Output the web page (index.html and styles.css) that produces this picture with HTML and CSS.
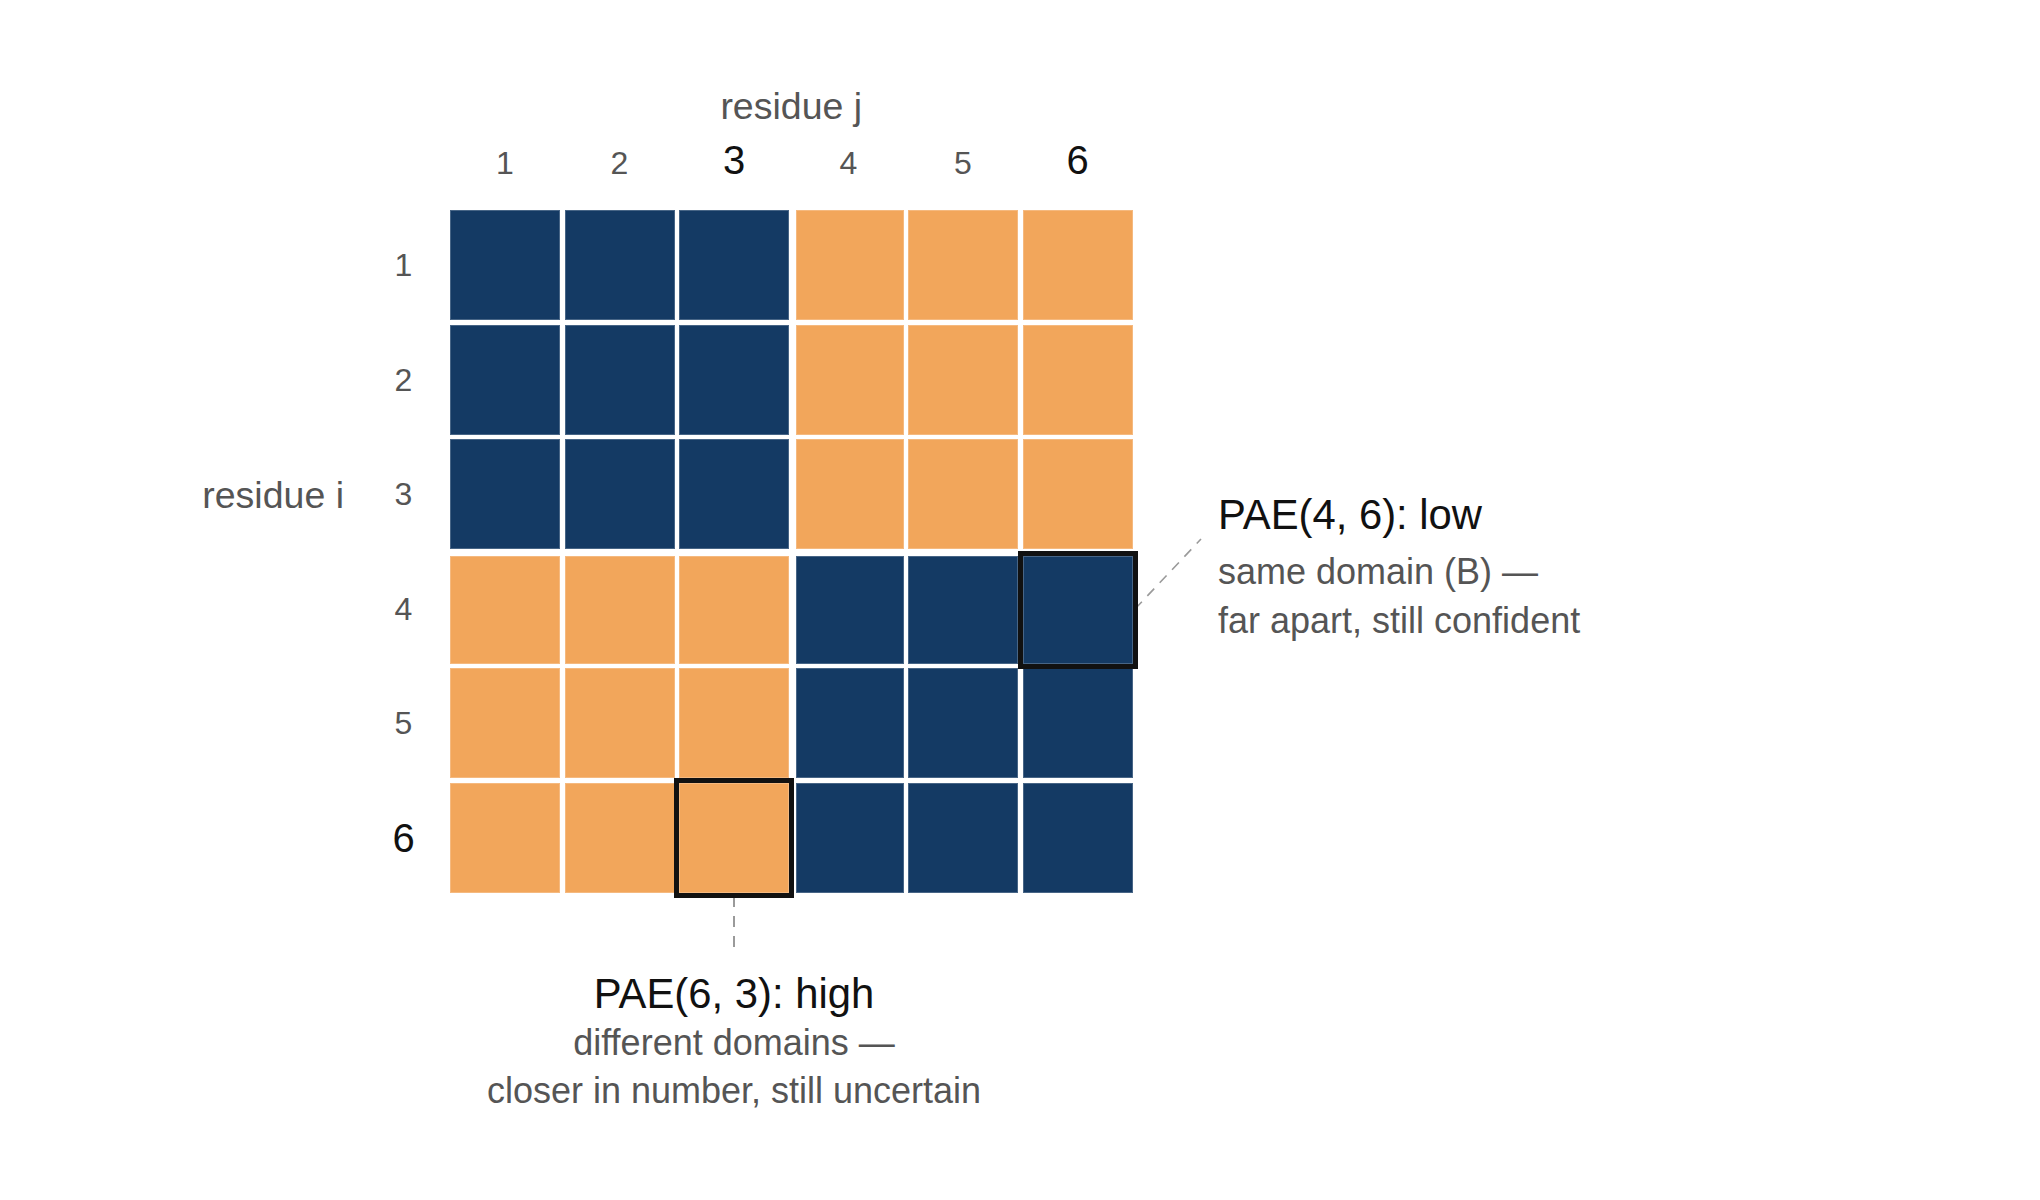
FILE: index.html
```html
<!DOCTYPE html>
<html lang="en">
<head>
<meta charset="utf-8">
<title>PAE matrix</title>
<link rel="stylesheet" href="styles.css">
</head>
<body>
<div class="figure">
  <div class="axis-j">residue j</div>
  <div class="colnums">
    <span class="num">1</span>
    <span class="num">2</span>
    <span class="num strong">3</span>
    <span class="num">4</span>
    <span class="num">5</span>
    <span class="num strong">6</span>
  </div>

  <div class="rowlabels">
    <span class="axis-i">residue i</span>
    <span class="rnum r1">1</span>
    <span class="rnum r2">2</span>
    <span class="rnum r3">3</span>
    <span class="rnum r4">4</span>
    <span class="rnum r5">5</span>
    <span class="rnum r6 strong">6</span>
  </div>

  <div class="heatmap">
    <div class="cell lo"></div><div class="cell lo"></div><div class="cell lo"></div><div class="cell hi d4"></div><div class="cell hi"></div><div class="cell hi"></div>
    <div class="cell lo"></div><div class="cell lo"></div><div class="cell lo"></div><div class="cell hi d4"></div><div class="cell hi"></div><div class="cell hi"></div>
    <div class="cell lo"></div><div class="cell lo"></div><div class="cell lo"></div><div class="cell hi d4"></div><div class="cell hi"></div><div class="cell hi"></div>
    <div class="cell hi r4"></div><div class="cell hi r4"></div><div class="cell hi r4"></div><div class="cell lo r4 d4"></div><div class="cell lo r4"></div><div class="cell lo r4 mark"></div>
    <div class="cell hi"></div><div class="cell hi"></div><div class="cell hi"></div><div class="cell lo d4"></div><div class="cell lo"></div><div class="cell lo"></div>
    <div class="cell hi"></div><div class="cell hi"></div><div class="cell hi mark"></div><div class="cell lo d4"></div><div class="cell lo"></div><div class="cell lo"></div>
  </div>

  <div class="note-right">
    <div class="note-title">PAE(4, 6): low</div>
    <div class="note-sub">same domain (B) —<br>far apart, still confident</div>
  </div>

  <div class="note-bottom">
    <svg class="leader-v" width="4" height="52" viewBox="0 0 4 52" aria-hidden="true">
      <line x1="2" y1="0" x2="2" y2="52" stroke="#9a9a9a" stroke-width="2" stroke-dasharray="11 9"/>
    </svg>
    <div class="note-title">PAE(6, 3): high</div>
    <div class="note-sub">different domains —<br>closer in number, still uncertain</div>
  </div>

  <svg class="leader-d" width="70" height="74" viewBox="0 0 70 74" aria-hidden="true">
    <line x1="2" y1="72" x2="68" y2="2" stroke="#9a9a9a" stroke-width="1.6" stroke-dasharray="10 8"/>
  </svg>
</div>
</body>
</html>
```

FILE: styles.css
```css
html, body {
  margin: 0;
  padding: 0;
  background: #ffffff;
}

body {
  width: 2040px;
  height: 1200px;
  overflow: hidden;
  font-family: "Liberation Sans", Arial, Helvetica, sans-serif;
  color: #555555;
}

.figure {
  position: relative;
  display: grid;
  grid-template-columns: 250px 682.5px auto;
  grid-template-rows: auto auto 682.5px auto;
  padding: 87px 0 0 200px;
}

/* column axis */
.axis-j {
  grid-column: 2;
  grid-row: 1;
  text-align: center;
  font-size: 37.5px;
  line-height: 38px;
  height: 38px;
  color: #555555;
}

.colnums {
  grid-column: 2;
  grid-row: 2;
  display: grid;
  grid-template-columns: repeat(6, 110px);
  column-gap: 4.5px;
  align-items: baseline;
  height: 39px;
  margin: 15px 0 31px;
}

.num {
  text-align: center;
  font-size: 32px;
  line-height: 1;
  color: #555555;
}

.num.strong {
  font-size: 40px;
  color: #111111;
}

/* row axis */
.rowlabels {
  grid-column: 1;
  grid-row: 3;
  display: grid;
  grid-template-columns: 1fr 93px;
  grid-template-rows: repeat(6, 110px);
  row-gap: 4.5px;
  align-items: center;
}

.axis-i {
  grid-column: 1;
  grid-row: 3;
  justify-self: end;
  padding: 4px 13px 0 0;
  font-size: 37.5px;
  line-height: 1;
  color: #555555;
}

.rnum {
  grid-column: 2;
  text-align: center;
  font-size: 32px;
  line-height: 1;
  color: #555555;
}

.rnum.r1 { grid-row: 1; }
.rnum.r2 { grid-row: 2; }
.rnum.r3 { grid-row: 3; }
.rnum.r4 { grid-row: 4; }
.rnum.r5 { grid-row: 5; }
.rnum.r6 { grid-row: 6; }

.rnum.strong {
  font-size: 40px;
  color: #111111;
}

/* heatmap */
.heatmap {
  grid-column: 2;
  grid-row: 3;
  display: grid;
  grid-template-columns: repeat(6, 110px);
  grid-template-rows: repeat(6, 110px);
  gap: 4.5px;
}

.cell {
  box-shadow: inset 0 0 0 1px rgba(255, 255, 255, 0.22);
}

.cell.lo { background: #143a64; }
.cell.hi { background: #f2a65b; }

.cell.d4 { margin-left: 2.5px; }
.cell.r4 { margin-top: 2.5px; }

.cell.mark {
  position: relative;
  z-index: 1;
  outline: 5px solid #111111;
  outline-offset: 0;
}

/* annotations */
.note-title {
  font-size: 41.8px;
  line-height: 41px;
  color: #111111;
  white-space: nowrap;
}

.note-sub {
  font-size: 36px;
  color: #555555;
  white-space: nowrap;
}

.note-right {
  grid-column: 3;
  grid-row: 3;
  align-self: start;
  margin-top: 284px;
  padding-left: 85.5px;
}

.note-right .note-sub {
  line-height: 49px;
  margin-top: 12px;
}

.note-bottom {
  grid-column: 2;
  grid-row: 4;
  display: grid;
  grid-template-columns: repeat(6, 110px);
  column-gap: 4.5px;
}

.note-bottom > * {
  grid-column: 3;
  justify-self: center;
  text-align: center;
}

.leader-v {
  display: block;
  margin-top: 3.5px;
}

.note-bottom .note-title {
  margin-top: 25px;
}

.note-bottom .note-sub {
  line-height: 48px;
  margin-top: 4.5px;
}

.leader-d {
  position: absolute;
  left: 1133px;
  top: 537px;
}
```
